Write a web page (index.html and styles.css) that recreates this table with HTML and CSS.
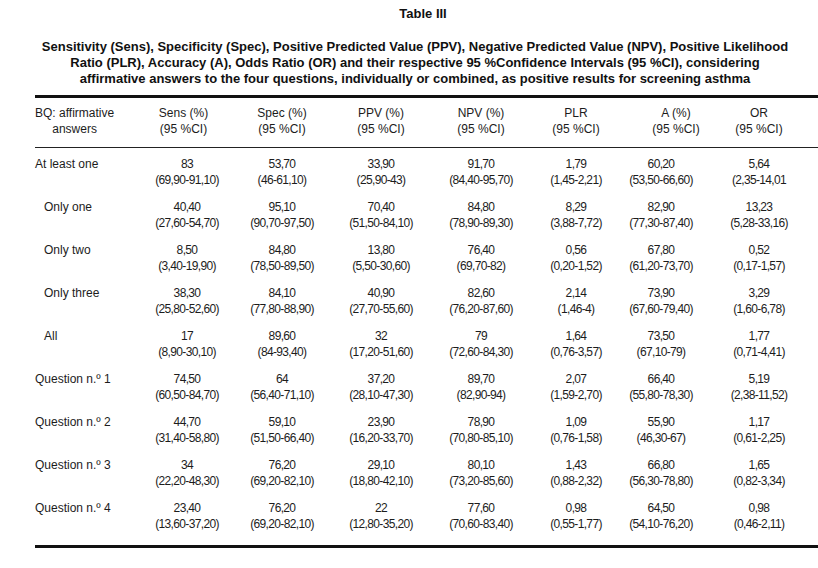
FILE: index.html
```html
<!DOCTYPE html>
<html>
<head>
<meta charset="utf-8">
<link rel="stylesheet" href="styles.css">
</head>
<body>
<div class="page">
  <div class="heading">
    <h1 class="title">Table III</h1>
    <p class="caption">Sensitivity (Sens), Specificity (Spec), Positive Predicted Value (PPV), Negative Predicted Value (NPV), Positive Likelihood<br>Ratio (PLR), Accuracy (A), Odds Ratio (OR) and their respective 95&nbsp;%Confidence Intervals (95&nbsp;%CI), considering<br>affirmative answers to the four questions, individually or combined, as positive results for screening asthma</p>
  </div>
  <table class="data">
    <colgroup>
      <col class="c-label"><col class="c-sens"><col class="c-spec"><col class="c-ppv"><col class="c-npv"><col class="c-plr"><col class="c-a"><col class="c-or">
    </colgroup>
    <thead>
      <tr>
        <th class="label-head"><span class="stack">BQ: affirmative<br>answers</span></th>
        <th class="h-sens">Sens (%)<br>(95 %CI)</th>
        <th>Spec (%)<br>(95 %CI)</th>
        <th>PPV (%)<br>(95 %CI)</th>
        <th>NPV (%)<br>(95 %CI)</th>
        <th>PLR<br>(95 %CI)</th>
        <th class="h-a">A (%)<br>(95 %CI)</th>
        <th>OR<br>(95 %CI)</th>
      </tr>
    </thead>
    <tbody>
      <tr>
        <td class="label">At least one</td>
        <td>83<br>(69,90-91,10)</td>
        <td>53,70<br>(46-61,10)</td>
        <td>33,90<br>(25,90-43)</td>
        <td>91,70<br>(84,40-95,70)</td>
        <td>1,79<br>(1,45-2,21)</td>
        <td>60,20<br>(53,50-66,60)</td>
        <td>5,64<br>(2,35-14,01</td>
      </tr>
      <tr>
        <td class="label sub">Only one</td>
        <td>40,40<br>(27,60-54,70)</td>
        <td>95,10<br>(90,70-97,50)</td>
        <td>70,40<br>(51,50-84,10)</td>
        <td>84,80<br>(78,90-89,30)</td>
        <td>8,29<br>(3,88-7,72)</td>
        <td>82,90<br>(77,30-87,40)</td>
        <td>13,23<br>(5,28-33,16)</td>
      </tr>
      <tr>
        <td class="label sub">Only two</td>
        <td>8,50<br>(3,40-19,90)</td>
        <td>84,80<br>(78,50-89,50)</td>
        <td>13,80<br>(5,50-30,60)</td>
        <td>76,40<br>(69,70-82)</td>
        <td>0,56<br>(0,20-1,52)</td>
        <td>67,80<br>(61,20-73,70)</td>
        <td>0,52<br>(0,17-1,57)</td>
      </tr>
      <tr>
        <td class="label sub">Only three</td>
        <td>38,30<br>(25,80-52,60)</td>
        <td>84,10<br>(77,80-88,90)</td>
        <td>40,90<br>(27,70-55,60)</td>
        <td>82,60<br>(76,20-87,60)</td>
        <td>2,14<br>(1,46-4)</td>
        <td>73,90<br>(67,60-79,40)</td>
        <td>3,29<br>(1,60-6,78)</td>
      </tr>
      <tr>
        <td class="label sub">All</td>
        <td>17<br>(8,90-30,10)</td>
        <td>89,60<br>(84-93,40)</td>
        <td>32<br>(17,20-51,60)</td>
        <td>79<br>(72,60-84,30)</td>
        <td>1,64<br>(0,76-3,57)</td>
        <td>73,50<br>(67,10-79)</td>
        <td>1,77<br>(0,71-4,41)</td>
      </tr>
      <tr>
        <td class="label">Question n.º 1</td>
        <td>74,50<br>(60,50-84,70)</td>
        <td>64<br>(56,40-71,10)</td>
        <td>37,20<br>(28,10-47,30)</td>
        <td>89,70<br>(82,90-94)</td>
        <td>2,07<br>(1,59-2,70)</td>
        <td>66,40<br>(55,80-78,30)</td>
        <td>5,19<br>(2,38-11,52)</td>
      </tr>
      <tr>
        <td class="label">Question n.º 2</td>
        <td>44,70<br>(31,40-58,80)</td>
        <td>59,10<br>(51,50-66,40)</td>
        <td>23,90<br>(16,20-33,70)</td>
        <td>78,90<br>(70,80-85,10)</td>
        <td>1,09<br>(0,76-1,58)</td>
        <td>55,90<br>(46,30-67)</td>
        <td>1,17<br>(0,61-2,25)</td>
      </tr>
      <tr>
        <td class="label">Question n.º 3</td>
        <td>34<br>(22,20-48,30)</td>
        <td>76,20<br>(69,20-82,10)</td>
        <td>29,10<br>(18,80-42,10)</td>
        <td>80,10<br>(73,20-85,60)</td>
        <td>1,43<br>(0,88-2,32)</td>
        <td>66,80<br>(56,30-78,80)</td>
        <td>1,65<br>(0,82-3,34)</td>
      </tr>
      <tr class="last">
        <td class="label">Question n.º 4</td>
        <td>23,40<br>(13,60-37,20)</td>
        <td>76,20<br>(69,20-82,10)</td>
        <td>22<br>(12,80-35,20)</td>
        <td>77,60<br>(70,60-83,40)</td>
        <td>0,98<br>(0,55-1,77)</td>
        <td>64,50<br>(54,10-76,20)</td>
        <td>0,98<br>(0,46-2,11)</td>
      </tr>
    </tbody>
  </table>
</div>
</body>
</html>
```
FILE: styles.css
```css
html, body {
  margin: 0;
  padding: 0;
  background: #ffffff;
}

.page {
  width: 818px;
  height: 568px;
  padding: 6px 0 0 35px;
  box-sizing: border-box;
  color: #1c1c1c;
  overflow: hidden;
}

.heading {
  width: 760px;
  text-align: center;
  font-family: "Liberation Sans", Arial, sans-serif;
  font-weight: bold;
  font-size: 13px;
  line-height: 16px;
  color: #111;
}

.title {
  margin: 0 0 17px 16px;
  font-size: 13px;
  line-height: 16px;
  font-weight: bold;
}

.caption {
  margin: 0 0 8px 0;
}

.data {
  width: 783px;
  border-collapse: collapse;
  table-layout: fixed;
  font-family: "Liberation Sans", Arial, sans-serif;
  font-size: 12px;
  line-height: 16px;
  border-top: 3px solid #111;
  border-bottom: 3px solid #111;
}

.c-label { width: 105px; }
.c-sens { width: 94px; }
.c-spec { width: 96px; }
.c-ppv { width: 102px; }
.c-npv { width: 98px; }
.c-plr { width: 92px; }
.c-a { width: 78px; }
.c-or { width: 118px; }

.data th {
  font-weight: normal;
  text-align: center;
  vertical-align: top;
  padding: 7px 0 10px 0;
  border-bottom: 1px solid #222;
  white-space: nowrap;
}

.data th.label-head {
  text-align: left;
}

.data th.h-sens {
  padding-right: 7px;
}

.data th.h-a {
  padding-left: 30px;
}

.stack {
  display: inline-block;
  text-align: center;
}

.data td {
  text-align: center;
  vertical-align: top;
  padding: 8px 0 3px 0;
  white-space: nowrap;
  letter-spacing: -0.65px;
}

.data td.label {
  text-align: left;
  letter-spacing: 0;
}

.data td.sub {
  padding-left: 9px;
}

.data tr.last td {
  padding-bottom: 13px;
}
```
